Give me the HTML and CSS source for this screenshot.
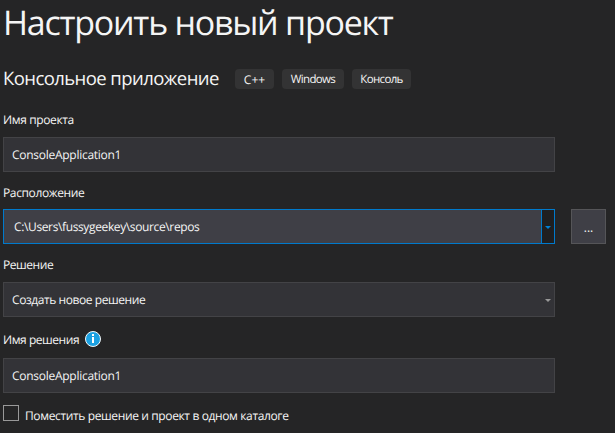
FILE: index.html
```html
<!DOCTYPE html>
<html lang="ru">
<head>
<meta charset="utf-8">
<title>Настроить новый проект</title>
<link rel="stylesheet" href="styles.css">
</head>
<body>
<main class="page">
  <h1 class="title">Настроить новый проект</h1>
  <div class="template">
    <h2 class="template-name">Консольное приложение</h2>
    <ul class="tags">
      <li class="tag tag-cpp">C++</li>
      <li class="tag tag-windows">Windows</li>
      <li class="tag tag-console">Консоль</li>
    </ul>
  </div>
  <section class="field field-name">
    <div class="label">Имя проекта</div>
    <div class="box"><span class="app">ConsoleApplication1</span></div>
  </section>
  <section class="field field-location">
    <div class="label">Расположение</div>
    <div class="row">
      <div class="box focused">
        <span class="path">C:\Users\fussygeekey\source\repos</span>
        <span class="drop"><svg class="arrow" viewBox="0 0 6 3"><path d="M0 0H6L3 3Z"/></svg></span>
      </div>
      <button class="browse" type="button">...</button>
    </div>
  </section>
  <section class="field field-solution">
    <div class="label label-solution">Решение</div>
    <div class="box select"><span class="create">Создать новое решение</span><svg class="arrow" viewBox="0 0 6 3"><path d="M0 0H6L3 3Z"/></svg></div>
  </section>
  <section class="field field-solution-name">
    <div class="label label-solution"><span class="label-text">Имя решения</span>
      <svg class="info" viewBox="0 0 16 16"><circle cx="8" cy="8" r="7.5" fill="#1ba1e2" stroke="#f4f8fa"/><path d="M7 3h2v2H7zM7 6h2v6H7z" fill="#fff"/></svg>
    </div>
    <div class="box"><span class="app">ConsoleApplication1</span></div>
  </section>
  <div class="check"><span class="checkbox"></span><span class="check-text">Поместить решение и проект в одном каталоге</span></div>
</main>
</body>
</html>
```
FILE: styles.css
```css
* { box-sizing: border-box; }
body {
  margin: 0;
  background: #252526;
  color: #f5f5f5;
  font: 12px/16px "Open Sans", "Noto Sans", sans-serif;
  letter-spacing: -0.37px;
  text-rendering: geometricPrecision;
  overflow: hidden;
}
.page { width: 615px; height: 433px; padding-left: 3px; }
.title { margin: 0; height: 69px; font-size: 34px; line-height: 44px; font-weight: 400; letter-spacing: -1.25px; white-space: nowrap; }
.template { display: flex; height: 43px; }
.template-name { margin: 0; width: 232px; font-size: 18.5px; line-height: 20px; font-weight: 400; letter-spacing: -0.57px; white-space: nowrap; }
.tags { display: flex; gap: 8px; margin: 0; padding: 0; list-style: none; }
.tag { height: 20px; border-radius: 4px; background: #333334; font-size: 11.5px; line-height: 21px; letter-spacing: -0.65px; text-align: center; white-space: nowrap; }
.tag-cpp { width: 39px; font-size: 12px; letter-spacing: 0; }
.tag-windows { width: 62px; }
.tag-console { width: 59px; }
.field { display: flex; flex-direction: column; justify-content: space-between; }
.field-name { height: 60px; }
.field-location { height: 59px; margin-top: 13px; }
.field-solution { height: 60px; margin-top: 13px; }
.field-solution-name { height: 62px; margin-top: 14px; }
.label { display: flex; align-items: center; height: 16px; white-space: nowrap; }
.label-solution { letter-spacing: -0.45px; }
.label-text { padding-top: 1px; }
.box { display: flex; align-items: center; width: 552px; height: 35px; padding-left: 8px; border: 1px solid #434346; background: #333337; white-space: nowrap; }
.app { letter-spacing: -0.27px; }
.row { display: flex; gap: 16px; }
.focused { justify-content: space-between; padding-left: 10px; border-color: #007acc; background: #3f3f46; }
.drop { display: flex; align-items: center; justify-content: center; width: 13px; height: 33px; border-left: 1px solid #007acc; background: #1f1f20; }
.arrow { display: block; width: 6px; height: 3px; fill: #999; }
.drop .arrow { margin-top: 2px; fill: #0080d4; }
.browse { width: 35px; height: 35px; padding: 2px 0 0; border: 1px solid #555558; background: #3f3f46; color: #f5f5f5; font: inherit; }
.select { justify-content: space-between; padding-right: 3px; }
.create { letter-spacing: -0.43px; }
.select .arrow { margin-top: 1px; }
.info { width: 16px; height: 16px; margin-left: 6px; }
.check { display: flex; height: 20px; margin-top: 12px; white-space: nowrap; }
.checkbox { width: 16px; height: 16px; margin-right: 6px; border: 1px solid #999; }
.check-text { line-height: 21px; }
```
